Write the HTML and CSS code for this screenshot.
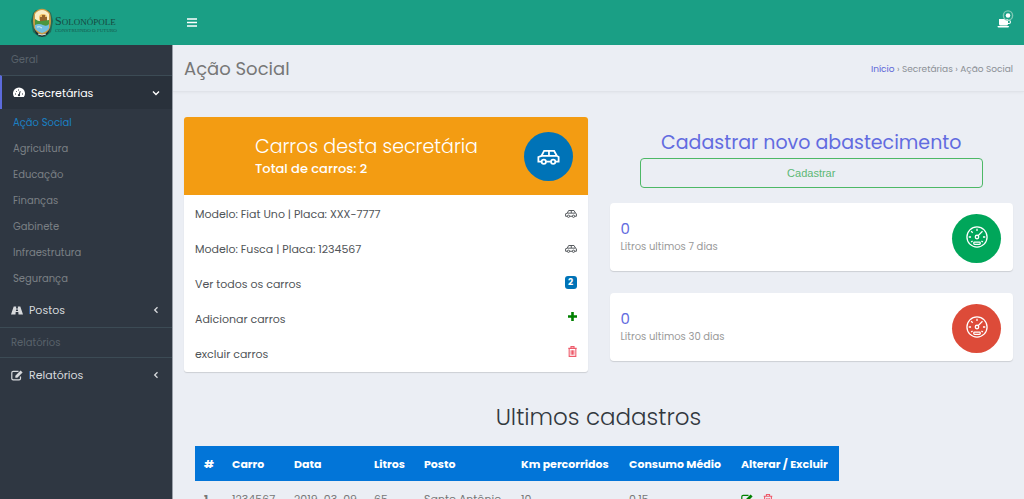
FILE: index.html
```html
<!DOCTYPE html>
<html lang="pt-BR">
<head>
<meta charset="utf-8">
<meta name="viewport" content="width=device-width, initial-scale=1">
<title>Ação Social</title>
<link rel="stylesheet" href="styles.css">
</head>
<body>
<svg class="sprite" aria-hidden="true">
  <symbol id="car" viewBox="0 0 24 16"><g fill="none" stroke="currentColor" stroke-width="1.900"><path d="M4.500 12.500H1.200V7.500L4.500 6.300 7.300 1H18l3 5.300 1.800 1.200v5h-3.300M9.500 12.500h5M4.500 6.300H21M12.500 1v5"/><circle cx="7" cy="12.500" r="2.300"/><circle cx="17" cy="12.500" r="2.300"/></g></symbol>
  <symbol id="gauge" viewBox="0 0 24 24"><g fill="none" stroke="currentColor" stroke-width="1.400"><circle cx="12" cy="12" r="11"/><path d="M12 3v2.500M3 12h2.500M18.500 12H21M5.600 5.600l1.700 1.700M5.600 17.500l1.600-1.200M18.400 17.500l-1.600-1.200M13 10.800l5-5"/><circle cx="12" cy="12" r="1.900"/><rect x="8.500" y="17.500" width="7" height="2.500" rx=".8"/></g></symbol>
  <symbol id="trash" viewBox="0 0 10 12"><path fill="none" stroke="currentColor" stroke-width="1.200" d="M.3 2.500h9.400M3.300 2.300V.6h3.400v1.700M1.300 2.500v8.900h7.400V2.500M3.500 4.500v5M5 4.500v5M6.500 4.500v5"/></symbol>
  <symbol id="edit" viewBox="0 0 12 11"><path fill="none" stroke="currentColor" stroke-width="1.200" d="M7.500 1.300H2.200Q.8 1.300.8 2.700v5.800q0 1.400 1.400 1.400h5.900q1.400 0 1.400-1.400V6.600"/><path fill="currentColor" d="M4.300 5.800 9.600.4l2 2-5.300 5.400h-2z"/></symbol>
  <symbol id="down" viewBox="0 0 8 8"><path fill="none" stroke="currentColor" stroke-width="1.400" d="M1 2.500l3 3 3-3"/></symbol>
  <symbol id="left" viewBox="0 0 8 8"><path fill="none" stroke="currentColor" stroke-width="1.300" d="M5.500 1.200 2.700 4l2.800 2.800"/></symbol>
</svg>

<header class="topbar">
  <a class="brand" href="#" aria-label="Solonópole">
    <svg class="crest" viewBox="0 0 24 30" aria-hidden="true">
      <path fill="#24594a" opacity=".75" d="M3 5l3-3 12 0 3 3 2 8-2 11-6 5H9l-6-5-2-11z"/>
      <path fill="#1b3036" d="M4 20h16l-2 6-6 3-6-3z"/>
      <path fill="#c99b45" d="M4 5Q8 .8 12 .8T20 5q2 8 0 15-2 5-8 7-6-2-8-7-2-7 0-15z"/>
      <path fill="#faedc5" d="M5 6q3-4 7-4t7 4v7H5z"/>
      <circle cx="13" cy="10" r="4" fill="#efbf60"/>
      <path fill="#97642b" d="M10 9h7v5h-7zM12 7h3v3h-3z"/>
      <path fill="#4b963e" d="M5 11q4 3 7 2l7-1v8H5z"/>
      <path fill="#73bfe1" d="M5 17q4-2 8 0t6-1v4q-1 3-7 5-6-2-7-5z"/>
      <path fill="none" stroke="#dff0e8" d="M7 19q3-1 5 1M8 26q4 2 8 0"/>
    </svg>
    <span class="brand-text"><span class="brand-name">S<small>OLONÓPOLE</small></span><span class="brand-tag">CONSTRUINDO O FUTURO</span></span>
  </a>
  <button class="icon-btn menu-btn" type="button" aria-label="Menu"><svg viewBox="0 0 10 9"><path stroke="currentColor" stroke-width="1.500" d="M0 1h10M0 4.500h10M0 8h10"/></svg></button>
  <button class="icon-btn coffee-btn" type="button" aria-label="Notificações"><svg viewBox="0 0 18 20"><path fill="currentColor" d="M3 9h9v1h1q2 0 2 2t-2 2h-1q0 1.500-1.500 1.500h-6Q3 15.500 3 14zM12 11v2h1q1 0 1-1t-1-1zM1.500 16H13q0 1.500-1.200 1.500H2.700Q1.500 17.500 1.500 16z"/><circle cx="12" cy="5.500" r="4.600" fill="none" stroke="#7fc8b4" stroke-width="1.400"/><circle cx="12" cy="5.500" r="2.300" fill="currentColor"/></svg></button>
</header>

<div class="layout">
  <nav class="sidebar" aria-label="Principal">
    <p class="nav-head">Geral</p>
    <a class="nav-item active" href="#"><svg class="nav-icon" viewBox="0 0 12 10"><path fill="currentColor" d="M1.200 9.500A6 6 0 1 1 10.800 9.500Z"/><path stroke="#29313b" d="M6 8l1.200-4.300M2 6.500h1M9 6.500h1M3 3.500l.7.700M5.500 2v1"/><circle cx="6" cy="7.700" r="1.100" fill="#29313b"/></svg><span>Secretárias</span><svg class="chev"><use href="#down"/></svg></a>
    <ul class="subnav">
      <li><a class="current" href="#">Ação Social</a></li>
      <li><a href="#">Agricultura</a></li>
      <li><a href="#">Educação</a></li>
      <li><a href="#">Finanças</a></li>
      <li><a href="#">Gabinete</a></li>
      <li><a href="#">Infraestrutura</a></li>
      <li><a href="#">Segurança</a></li>
    </ul>
    <a class="nav-item" href="#"><svg class="nav-icon" viewBox="0 0 12 10"><path fill="currentColor" d="M2.700 1h2.500L5 3h2l-.2-2h2.500L12 9H7.500l-.2-2.500H4.700L4.500 9H0zM5.100 4l-.2 1.500h2.200L6.900 4z"/></svg><span>Postos</span><svg class="chev"><use href="#left"/></svg></a>
    <p class="nav-head ruled">Relatórios</p>
    <a class="nav-item" href="#"><svg class="nav-icon"><use href="#edit"/></svg><span>Relatórios</span><svg class="chev"><use href="#left"/></svg></a>
  </nav>

  <main class="main">
    <div class="page-head">
      <h1>Ação Social</h1>
      <div class="crumbs"><a href="#">Início</a> › Secretárias › Ação Social</div>
    </div>
    <div class="content">
      <section class="cars">
        <div class="cars-head">
          <div class="cars-title"><h2>Carros desta secretária</h2><p>Total de carros: 2</p></div>
          <span class="disc blue"><svg class="car-lg"><use href="#car"/></svg></span>
        </div>
        <ul class="car-list">
          <li><a href="#">Modelo: Fiat Uno | Placa: XXX-7777<svg class="car-sm"><use href="#car"/></svg></a></li>
          <li><a href="#">Modelo: Fusca | Placa: 1234567<svg class="car-sm"><use href="#car"/></svg></a></li>
          <li><a href="#">Ver todos os carros<span class="badge">2</span></a></li>
          <li><a href="#">Adicionar carros<svg class="plus" viewBox="0 0 9 9"><path fill="currentColor" d="M3.200 0h2.600v3.200H9v2.600H5.800V9H3.200V5.800H0V3.200h3.200z"/></svg></a></li>
          <li><a href="#">excluir carros<svg class="trash"><use href="#trash"/></svg></a></li>
        </ul>
      </section>
      <section class="side">
        <div class="register"><h2>Cadastrar novo abastecimento</h2><button type="button">Cadastrar</button></div>
        <div class="stat"><div><strong>0</strong><span>Litros ultimos 7 dias</span></div><span class="disc green"><svg class="gauge"><use href="#gauge"/></svg></span></div>
        <div class="stat"><div><strong>0</strong><span>Litros ultimos 30 dias</span></div><span class="disc red"><svg class="gauge"><use href="#gauge"/></svg></span></div>
      </section>
    </div>
    <section class="latest">
      <h2>Ultimos cadastros</h2>
      <table>
        <colgroup><col class="c-id"><col class="c-car"><col class="c-date"><col class="c-liters"><col class="c-station"><col class="c-km"><col class="c-use"><col class="c-act"></colgroup>
        <thead><tr><th>#</th><th>Carro</th><th>Data</th><th>Litros</th><th>Posto</th><th>Km percorridos</th><th>Consumo Médio</th><th>Alterar / Excluir</th></tr></thead>
        <tbody><tr><th scope="row">1</th><td>1234567</td><td>2019-03-09</td><td>65</td><td>Santo Antônio</td><td>10</td><td>0.15</td><td><a class="row-edit" href="#" aria-label="Alterar"><svg><use href="#edit"/></svg></a><a class="row-del" href="#" aria-label="Excluir"><svg><use href="#trash"/></svg></a></td></tr></tbody>
      </table>
    </section>
  </main>
</div>
</body>
</html>
```
FILE: styles.css
```css
* { box-sizing: border-box; }
html { scrollbar-width: none; }
body {
  margin: 0;
  min-height: 100vh;
  display: flex;
  flex-direction: column;
  background: #ebeef4;
  color: #777;
  font: 11px/16px Poppins, Inter, "Open Sans", sans-serif;
}
h1, h2, p, ul { margin: 0; padding: 0; font-weight: 400; }
ul { list-style: none; }
a { color: inherit; text-decoration: none; }
svg { display: block; flex: none; }
.sprite { position: absolute; width: 0; height: 0; }

.topbar { display: flex; align-items: center; height: 45px; background: #1a9f85; color: #fff; padding-right: 10px; }
.brand { display: flex; align-items: center; gap: 1px; width: 172px; padding-left: 30px; color: #17483f; }
.crest { width: 24px; height: 30px; }
.brand-text { display: flex; flex-direction: column; padding-top: 3px; font-family: "Liberation Serif", serif; }
.brand-name { font-size: 12px; line-height: 11px; }
.brand-name small { font-size: 9px; }
.brand-tag { font-size: 5px; line-height: 5px; opacity: .8; }
.icon-btn { border: 0; padding: 0; background: none; color: inherit; }
.menu-btn { margin-left: 15px; }
.menu-btn svg { width: 10px; height: 9px; }
.coffee-btn { margin: 0 0 6px auto; }
.coffee-btn svg { width: 18px; height: 20px; }

.layout { display: flex; flex: 1; }
.sidebar { width: 173px; flex: none; background: #2f3742; border-right: 1px solid #9aa0a9; }
.nav-head { padding: 7px 11px; height: 30px; color: #59626b; font-size: 10px; }
.ruled { border-top: 1px solid #3c4b55; border-bottom: 1px solid #3c4b55; height: 31px; }
.nav-item { display: flex; align-items: center; height: 34px; padding: 0 12px 0 11px; gap: 6px; color: #d8dadd; font-size: 11px; }
.nav-item.active { background: #29313b; color: #fff; border-left: 2px solid #5c6bdc; border-top: 1px solid #3c4b55; }
.nav-icon { width: 12px; height: 11px; }
.chev { width: 8px; height: 8px; margin-left: auto; }
.subnav { padding: 1px 0 1px 13px; color: #7b8085; font-size: 10px; }
.subnav a { display: block; padding: 5px 0; line-height: 16px; }
.subnav li { height: 26px; }
.subnav .current { color: #1a80c4; }

.main { flex: 1; min-width: 0; }
.page-head { display: flex; justify-content: space-between; align-items: center; height: 47px; padding: 2px 11px 0; border-bottom: 1px solid #e0e3e9; box-shadow: 0 1px 3px #0000000a; }
h1 { font-size: 18px; line-height: 26px; }
.crumbs { font-size: 9px; color: #8c9096; }
.crumbs a { color: #6068d8; }
.content { display: grid; grid-template-columns: 1fr 1fr; gap: 22px; padding: 25px 11px 0; }
.cars { background: #fff; border-radius: 3px; box-shadow: 0 1px 1px #0002; overflow: hidden; align-self: start; }
.cars-head { display: flex; align-items: center; justify-content: space-between; height: 78px; padding: 0 15px 0 71px; background: #f39c12; color: #fff; }
.cars-head h2 { font-size: 19px; line-height: 26px; font-weight: 300; }
.cars-head p { font-size: 13px; line-height: 18px; font-weight: 500; }
.disc { display: flex; align-items: center; justify-content: center; width: 49px; height: 49px; border-radius: 50%; color: #fff; }
.blue { background: #0073b7; }
.green { background: #00a65a; }
.red { background: #dd4b39; }
.car-lg { width: 23px; height: 15px; margin-top: 3px; }
.gauge { width: 22px; height: 22px; margin-bottom: 4px; }
.car-list { padding: 1px 0; color: #505458; font-size: 11px; }
.car-list a { display: flex; align-items: center; justify-content: space-between; height: 35px; padding: 0 11px; }
.car-sm { width: 12px; height: 8px; }
.badge { width: 12px; height: 13px; margin-bottom: 3px; border-radius: 3px; background: #0073b7; color: #fff; font-size: 9px; line-height: 13px; font-weight: 700; text-align: center; }
.plus { width: 9px; height: 9px; margin: 0 0 5px; color: green; }
.trash { width: 9px; height: 11px; margin-bottom: 4px; color: #ee5b6b; }

.register { padding: 12px 30px 15px; text-align: center; }
.register h2 { color: #626be0; font-size: 19px; line-height: 28px; }
.register button { display: block; width: 100%; height: 30px; margin-top: 1px; border: 1px solid #4db866; border-radius: 4px; background: none; color: #5cb874; font: 11px/16px "Liberation Sans", Arial, sans-serif; }
.stat { display: flex; align-items: center; justify-content: space-between; height: 68px; margin-bottom: 22px; padding: 0 12px 0 11px; background: #fff; border-radius: 4px; box-shadow: 0 1px 1px #0002; }
.stat:last-child { margin-bottom: 0; }
.stat .disc { margin-top: 3px; }
.stat strong { display: block; color: #626be0; font-size: 15px; line-height: 20px; font-weight: 400; }
.stat div span { display: block; color: #999; font-size: 10px; line-height: 16px; }

.latest { padding: 30px 22px 0; }
.latest h2 { color: #32383e; font-size: 23px; line-height: 30px; font-weight: 300; text-align: center; }
table { width: 644px; margin-top: 14px; table-layout: fixed; border-collapse: collapse; }
th, td { height: 35px; padding: 0 0 0 9px; text-align: left; white-space: nowrap; }
thead { background: #0275d8; color: #fff; font-size: 11px; }
tbody tr { height: 36px; }
td svg { width: 12px; height: 11px; }
td a { display: inline-block; vertical-align: middle; margin-right: 9px; }
.row-edit { color: green; }
.row-del { color: #ee5b6b; }
.c-id { width: 28px; }
.c-car { width: 62px; }
.c-date { width: 80px; }
.c-liters { width: 50px; }
.c-station { width: 97px; }
.c-km { width: 108px; }
.c-use { width: 112px; }
.c-act { width: 107px; }
```
